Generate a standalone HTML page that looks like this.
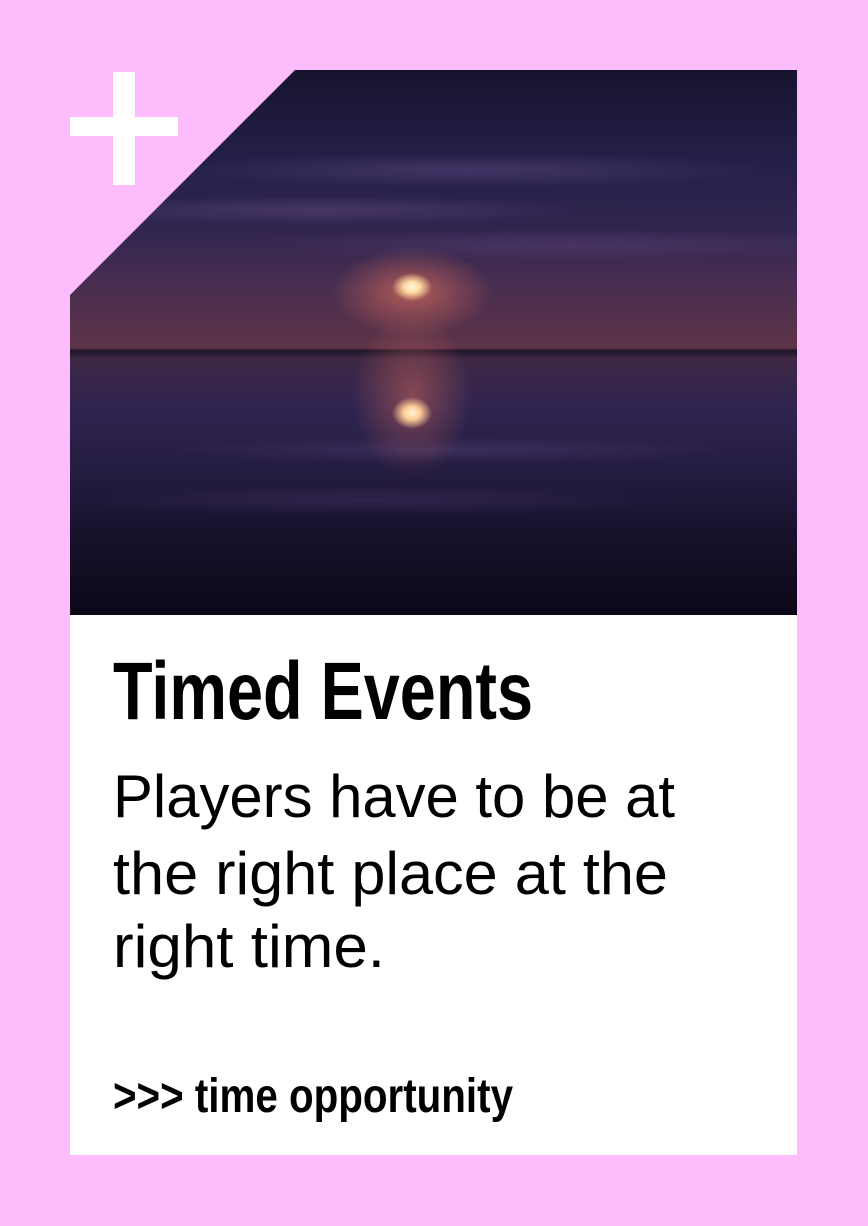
<!DOCTYPE html>
<html><head><meta charset="utf-8">
<style>
html,body{margin:0;padding:0;}
body{width:868px;height:1226px;background:#fdbdfd;position:relative;overflow:hidden;font-family:"Liberation Sans",sans-serif;}
.card{position:absolute;left:70px;top:615px;width:727px;height:540px;background:#fff;}
.img{position:absolute;left:70px;top:70px;width:727px;height:545px;
clip-path:polygon(225px 0,727px 0,727px 545px,0 545px,0 225px);
background:
radial-gradient(ellipse 20px 14px at 342px 217px,#fff8e0 0%,#ffd9a0 40%,rgba(255,160,110,0) 100%),
radial-gradient(ellipse 80px 45px at 342px 222px,rgba(220,110,90,.7),rgba(180,80,80,0) 100%),
radial-gradient(ellipse 20px 16px at 342px 343px,#fff4d8 0%,#ffcf98 40%,rgba(255,160,110,0) 100%),
radial-gradient(ellipse 60px 80px at 342px 325px,rgba(200,100,90,.55),rgba(150,70,80,0) 100%),
radial-gradient(ellipse 300px 18px at 400px 100px,rgba(120,90,150,.35),rgba(0,0,0,0)),
radial-gradient(ellipse 260px 14px at 250px 140px,rgba(120,90,150,.35),rgba(0,0,0,0)),
radial-gradient(ellipse 320px 16px at 500px 175px,rgba(110,80,140,.3),rgba(0,0,0,0)),
radial-gradient(ellipse 280px 14px at 380px 380px,rgba(100,80,140,.3),rgba(0,0,0,0)),
radial-gradient(ellipse 300px 16px at 300px 430px,rgba(90,70,130,.28),rgba(0,0,0,0)),
linear-gradient(to bottom,#17142f 0%,#25204a 18%,#322650 30%,#4a2e50 40%,#5e3448 51%,#1e1428 51.5%,#3e2846 53%,#302450 62%,#241c40 74%,#16112a 86%,#0c0818 100%);}
.plus1{position:absolute;left:113px;top:72px;width:22px;height:113px;background:#fff;}
.plus2{position:absolute;left:70px;top:117px;width:108px;height:19px;background:#fff;}
.t{position:absolute;left:113px;white-space:nowrap;line-height:1;color:#000;transform-origin:0 0;}
</style></head><body>
<div class="img"></div>
<div class="plus1"></div><div class="plus2"></div>
<div class="card"></div>
<div class="t" data-w="420" style="top:651px;font-size:82px;font-weight:bold;">Timed Events</div>
<div class="t" data-w="562" style="top:767px;font-size:60px;">Players have to be at</div>
<div class="t" data-w="555" style="top:844px;font-size:60px;">the right place at the</div>
<div class="t" data-w="272" style="top:917px;font-size:60px;">right time.</div>
<div class="t" data-w="400" style="top:1073px;font-size:48px;font-weight:bold;">&gt;&gt;&gt; time opportunity</div>
<script>
document.querySelectorAll('.t').forEach(function(e){var w=e.getBoundingClientRect().width;var t=+e.getAttribute('data-w');if(w>0)e.style.transform='scaleX('+(t/w)+')';});
</script>
</body></html>
